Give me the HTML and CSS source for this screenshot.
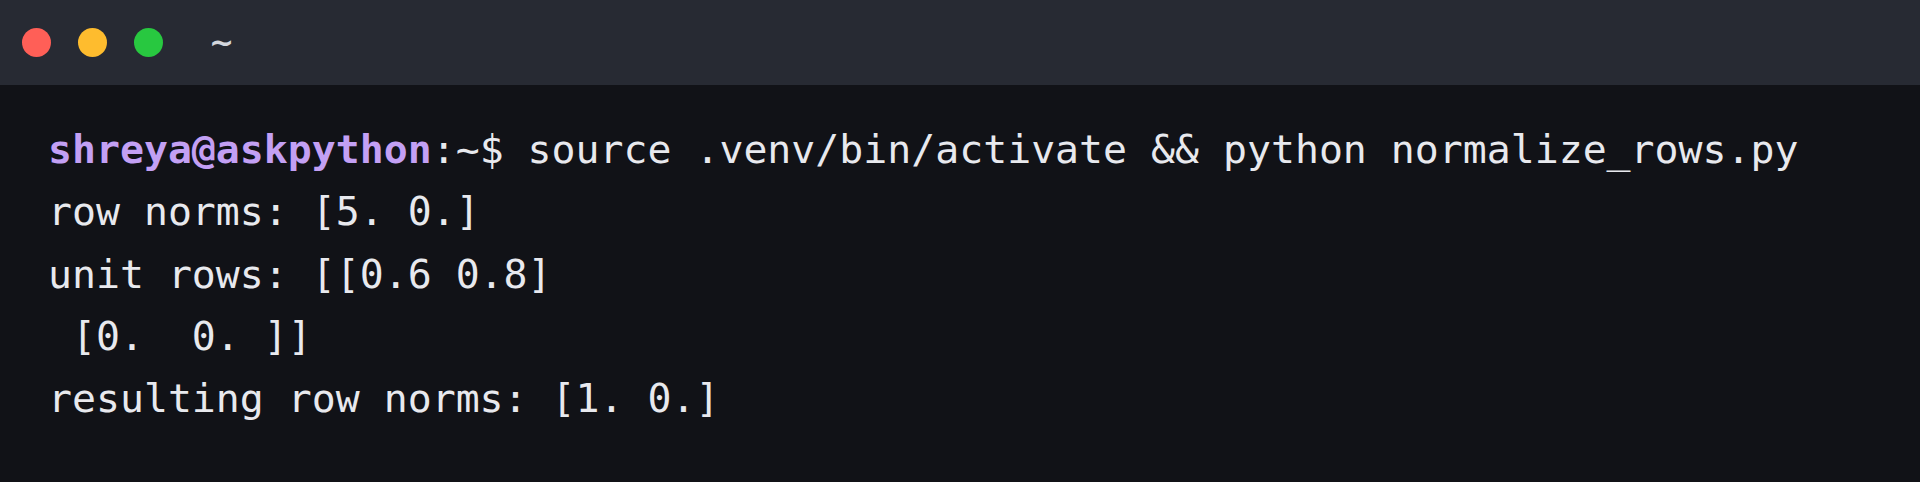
FILE: index.html
```html
<!DOCTYPE html>
<html lang="en">
<head>
<meta charset="utf-8">
<title>Terminal</title>
<link rel="stylesheet" href="styles.css">
</head>
<body>
<div class="window">
  <div class="titlebar">
    <span class="dot dot-red"></span>
    <span class="dot dot-yellow"></span>
    <span class="dot dot-green"></span>
    <span class="title">~</span>
  </div>
  <pre class="term"><span class="prompt">shreya@askpython</span>:~$ source .venv/bin/activate &amp;&amp; python normalize_rows.py
row norms: [5. 0.]
unit rows: [[0.6 0.8]
 [0.  0. ]]
resulting row norms: [1. 0.]</pre>
</div>
</body>
</html>
```
FILE: styles.css
```css
html, body {
  margin: 0;
  padding: 0;
  background: #111217;
}
.window {
  width: 1920px;
  height: 482px;
  display: flex;
  flex-direction: column;
  background: #111217;
}
.titlebar {
  height: 85px;
  flex: 0 0 85px;
  background: #272a33;
  display: flex;
  align-items: center;
  padding-left: 22px;
  box-sizing: border-box;
  gap: 27px;
}
.dot {
  width: 29px;
  height: 29px;
  border-radius: 50%;
  display: block;
}
.dot-red { background: #ff5f57; }
.dot-yellow { background: #febc2e; }
.dot-green { background: #28c840; }
.title {
  margin-left: 19px;
  color: #d3d6dd;
  font-family: "DejaVu Sans", sans-serif;
  font-size: 30px;
  font-weight: bold;
  line-height: 1;
}
.term {
  margin: 0;
  padding: 33px 0 0 48px;
  font-family: "DejaVu Sans Mono", monospace;
  font-size: 39.85px;
  line-height: 62.3px;
  color: #e8e9ee;
  white-space: pre;
}
.prompt {
  color: #c3a0f4;
  font-weight: bold;
}
```
